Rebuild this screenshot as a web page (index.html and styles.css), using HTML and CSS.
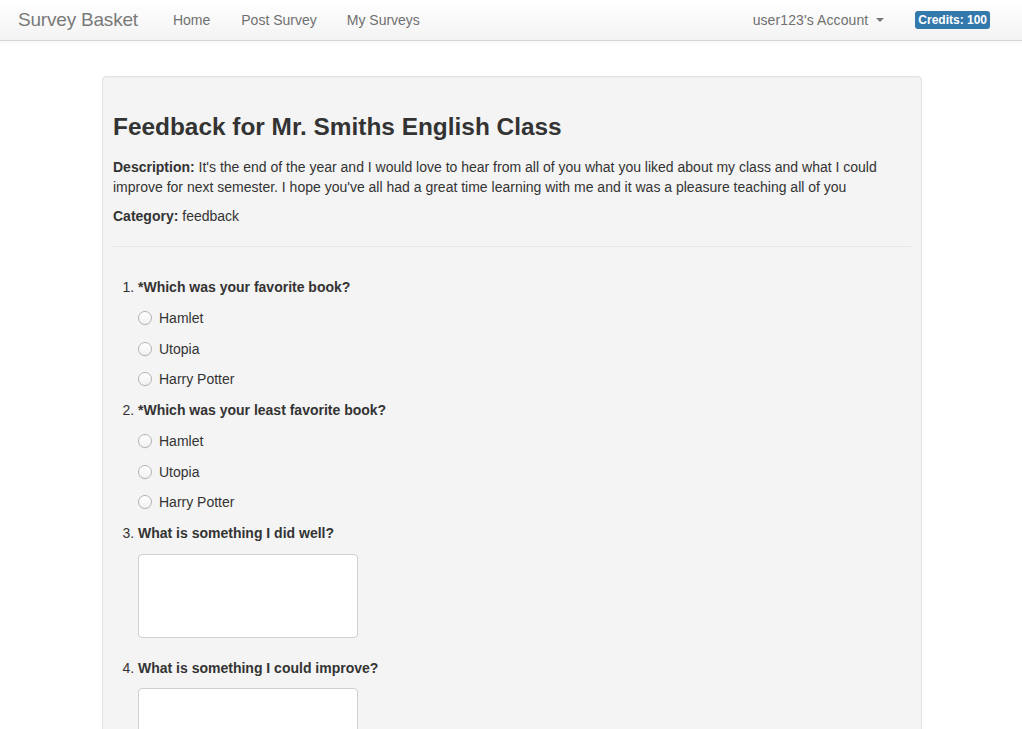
FILE: index.html
```html
<!DOCTYPE html>
<html lang="en">
<head>
<meta charset="utf-8">
<title>Survey Basket</title>
<link rel="stylesheet" href="styles.css">
</head>
<body>
<nav class="navbar">
  <a class="brand" href="#">Survey Basket</a>
  <ul class="nav">
    <li><a href="#">Home</a></li>
    <li><a href="#">Post Survey</a></li>
    <li><a href="#">My Surveys</a></li>
  </ul>
  <div class="nav-right">
    <a class="account" href="#">user123's Account <span class="caret"></span></a>
    <span class="badge">Credits: 100</span>
  </div>
</nav>
<main class="main">
  <section class="well">
    <h3 class="title">Feedback for Mr. Smiths English Class</h3>
    <p class="meta"><b>Description:</b> It's the end of the year and I would love to hear from all of you what you liked about my class and what I could improve for next semester. I hope you've all had a great time learning with me and it was a pleasure teaching all of you</p>
    <p class="meta"><b>Category:</b> feedback</p>
    <hr class="rule">
    <ol class="questions">
      <li class="question">
        <div class="q-body">
          <div class="q-title">*Which was your favorite book?</div>
          <label class="option"><span class="radio"></span>Hamlet</label>
          <label class="option"><span class="radio"></span>Utopia</label>
          <label class="option"><span class="radio"></span>Harry Potter</label>
        </div>
      </li>
      <li class="question">
        <div class="q-body">
          <div class="q-title">*Which was your least favorite book?</div>
          <label class="option"><span class="radio"></span>Hamlet</label>
          <label class="option"><span class="radio"></span>Utopia</label>
          <label class="option"><span class="radio"></span>Harry Potter</label>
        </div>
      </li>
      <li class="question">
        <div class="q-body">
          <div class="q-title">What is something I did well?</div>
          <textarea class="answer"></textarea>
        </div>
      </li>
      <li class="question">
        <div class="q-body">
          <div class="q-title">What is something I could improve?</div>
          <textarea class="answer"></textarea>
        </div>
      </li>
    </ol>
  </section>
</main>
</body>
</html>
```
FILE: styles.css
```css
* { box-sizing: border-box; }
html, body { margin: 0; padding: 0; }
body {
  font-family: "Liberation Sans", Arial, sans-serif;
  font-size: 14px;
  line-height: 20px;
  color: #333;
  background: #fff;
  overflow: hidden;
  height: 729px;
}
a { text-decoration: none; }

.navbar {
  display: flex;
  align-items: center;
  height: 41px;
  padding: 0 32px 0 18px;
  background: linear-gradient(to bottom, #ffffff 0%, #f3f3f3 100%);
  border-bottom: 1px solid #d6d6d6;
  box-shadow: 0 1px 4px rgba(0,0,0,0.06);
}
.brand {
  font-size: 19px;
  color: #7a7a7a;
  padding-right: 20px;
  line-height: 40px;
  letter-spacing: -0.2px;
}
.nav {
  display: flex;
  list-style: none;
  margin: 0;
  padding: 0;
}
.nav a, .account {
  display: block;
  padding: 0 15px;
  color: #707070;
  line-height: 40px;
}
.nav li:nth-child(2) a { padding-left: 16px; }
.nav-right {
  margin-left: auto;
  display: flex;
  align-items: center;
}
.account { letter-spacing: 0.1px; }
.caret {
  display: inline-block;
  width: 0;
  height: 0;
  margin-left: 4px;
  vertical-align: middle;
  border-top: 4px solid #777;
  border-left: 4px solid transparent;
  border-right: 4px solid transparent;
  position: relative;
  top: -1px;
}
.badge {
  margin-left: 16px;
  background: #3479ab;
  color: #fff;
  font-weight: bold;
  font-size: 12px;
  line-height: 18px;
  height: 18px;
  padding: 0 3px;
  border-radius: 3px;
}

.main {
  padding-top: 35px;
}
.well {
  width: 820px;
  margin-left: 102px;
  min-height: 700px;
  padding: 10px;
  background: #f4f4f4;
  border: 1px solid #e3e3e3;
  border-radius: 4px;
  box-shadow: inset 0 1px 1px rgba(0,0,0,0.03);
}
.title {
  margin: 27px 0 17px;
  font-size: 24.4px;
  line-height: 26px;
  font-weight: bold;
  color: #333;
}
.meta {
  margin: 0 0 9px;
}
.rule {
  margin: 20px 0 0;
  border: 0;
  border-top: 1px solid #e6e6e6;
  height: 0;
}
.questions {
  margin: 30px 0 0;
  padding-left: 25px;
}
.question {
  margin-bottom: 10.75px;
}
.q-body {
  display: flex;
  flex-direction: column;
  align-items: flex-start;
  gap: 10.75px;
}
.q-title { font-weight: bold; }
.option {
  display: flex;
  align-items: center;
  height: 20px;
}
.radio {
  width: 14px;
  height: 14px;
  margin-right: 7px;
  border-radius: 50%;
  border: 1px solid #b3b3b3;
  background: linear-gradient(to bottom, #ffffff 0%, #f1f1f1 100%);
  box-shadow: 0 0.5px 0.5px rgba(0,0,0,0.08);
}
.answer {
  display: block;
  width: 220px;
  height: 84px;
  margin: 0 0 9px;
  border: 1px solid #cfcfcf;
  border-radius: 4px;
  background: #fff;
  resize: none;
  font: inherit;
}
```
